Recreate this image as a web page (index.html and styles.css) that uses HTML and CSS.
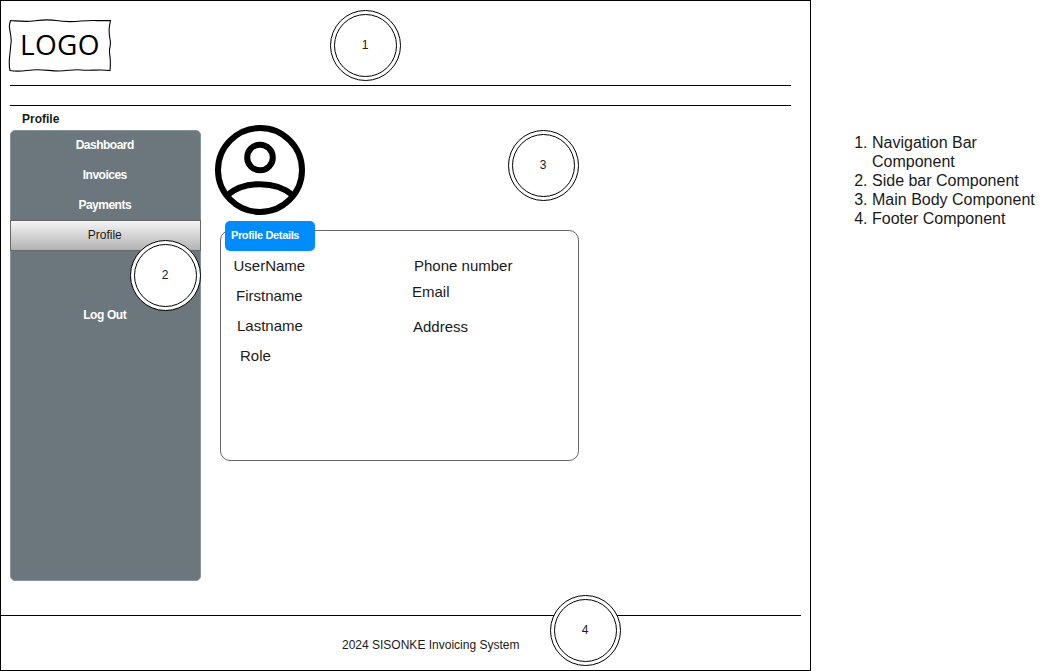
FILE: index.html
```html
<!DOCTYPE html>
<html lang="en">
<head>
<meta charset="utf-8">
<title>Profile</title>
<link rel="stylesheet" href="styles.css">
</head>
<body>
<div class="page">
  <div class="frame">
    <header class="navbar">
      <div class="logo">
        <svg class="logo-outline" width="104" height="54" viewBox="0 0 104 54" fill="none" stroke="#000" stroke-width="1.1">
          <path d="M2 1.500 C10 2 17 3 25 2 S39 0 48 1.500 S63 3 73 2 S92 2 102.500 1.500 C101 9 100.500 12 102 20 S101 27 101.500 33 S103 41 102 51.500 C91 50 83 52 74 51 S60 52 51 52 S34 50 24 51 S10 53 2 51.500 C0 43 2 37 2.500 29 S4 24 2.500 15 S1 7 2.500 1.500"/>
        </svg>
        <span class="logo-text">LOGO</span>
      </div>
      <div class="badge badge-1">1</div>
    </header>
    <main class="body">
      <div class="side">
        <h1 class="title">Profile</h1>
        <nav class="sidebar">
          <a class="item">Dashboard</a>
          <a class="item">Invoices</a>
          <a class="item">Payments</a>
          <a class="item active">Profile</a>
          <a class="item logout">Log Out</a>
          <div class="badge badge-2">2</div>
        </nav>
      </div>
      <section class="content">
        <svg class="avatar" width="90" height="90" viewBox="0 0 90 90" fill="none" stroke="#000" stroke-width="6">
          <circle cx="45" cy="45" r="42"/>
          <circle cx="45" cy="32.500" r="12.800"/>
          <path d="M12.500 70 C29 55.500 61 55.500 77.500 70"/>
        </svg>
        <div class="card">
          <div class="tab">Profile Details</div>
          <div class="fields">
            <div class="column">
              <span class="username">UserName</span>
              <span class="firstname">Firstname</span>
              <span class="lastname">Lastname</span>
              <span class="role">Role</span>
            </div>
            <div class="column">
              <span class="phone">Phone number</span>
              <span class="email">Email</span>
              <span class="address">Address</span>
            </div>
          </div>
        </div>
        <div class="badge badge-3">3</div>
      </section>
    </main>
    <footer class="footer">
      <span class="copyright">2024 SISONKE Invoicing System</span>
      <div class="badge badge-4">4</div>
    </footer>
  </div>
  <ol class="legend">
    <li>Navigation Bar<br>Component</li>
    <li>Side bar Component</li>
    <li>Main Body Component</li>
    <li>Footer Component</li>
  </ol>
</div>
</body>
</html>
```

FILE: styles.css
```css
* { box-sizing: border-box; }
body {
  margin: 0;
  background: #fff;
  color: #000;
  font: 12px/14px "Liberation Sans", Arial, sans-serif;
}
.page { display: flex; height: 671px; overflow: hidden; }
.frame {
  display: flex;
  flex: none;
  flex-direction: column;
  width: 811px;
  height: 671px;
  border: 1px solid #000;
}
.navbar {
  position: relative;
  height: 105px;
  margin: 0 19px 0 9px;
  border-bottom: 1px solid #000;
}
.navbar::after { content: ""; display: block; border-top: 1px solid #000; margin-top: 12px; }
.logo { position: relative; height: 72px; padding: 24px 0 0 10px; }
.logo-outline { position: absolute; left: -2px; top: 18px; }
.logo-text { display: block; font: 28px/38px "Open Sans", sans-serif; letter-spacing: .3px; }
.body { display: flex; height: 509px; padding-left: 9px; }
.side { width: 191px; margin-right: 9px; }
.title { margin: 0; padding: 6px 0 4px 12px; font-size: 12px; line-height: 14px; color: #1a1a1a; }
.sidebar {
  position: relative;
  display: flex;
  flex-direction: column;
  height: 451px;
  border: 1px solid #87939a;
  border-radius: 5px;
  background: #6c777d;
}
.item {
  height: 30px;
  padding-right: 1.500px;
  line-height: 28px;
  text-align: center;
  font-size: 12px;
  font-weight: bold;
  letter-spacing: -.5px;
  color: #fff;
}
.active {
  margin: -1px -1px 0;
  height: 31px;
  border: 1px solid #666;
  background: linear-gradient(#f5f5f5, #b3b3b3);
  color: #1a1a1a;
  font-weight: normal;
  letter-spacing: 0;
}
.logout { margin-top: 50px; letter-spacing: -.4px; }
.content { position: relative; width: 369px; padding: 19px 0 0 5px; }
.avatar { display: block; }
.card {
  width: 359px;
  height: 231px;
  margin: 15px 0 0 5px;
  border: 1px solid #666;
  border-radius: 10px;
}
.tab {
  width: 90px;
  height: 30px;
  margin: -10.500px 0 0 4.400px;
  padding-left: 5.500px;
  border-radius: 5px;
  background: #008cff;
  color: #fff;
  font-size: 11px;
  font-weight: bold;
  line-height: 28px;
  letter-spacing: -.34px;
}
.fields {
  display: grid;
  grid-template-columns: 179px 1fr;
  padding: 5.500px 0 0 12px;
  font-size: 15px;
  line-height: 20px;
  color: #1a1a1a;
}
.column { display: flex; flex-direction: column; gap: 10px; }
.username { padding-left: .5px; }
.firstname { padding-left: 3px; }
.lastname { padding-left: 4px; }
.role { padding-left: 7px; }
.phone { padding-left: 2px; }
.email { margin-top: -4px; }
.address { margin-top: 5px; padding-left: 1px; }
.footer {
  position: relative;
  width: 800px;
  flex: 1;
  padding: 22px 0 0 341px;
  border-top: 1px solid #000;
  color: #1a1a1a;
}
.badge {
  position: absolute;
  width: 71px;
  height: 71px;
  padding-right: 1px;
  border: 1px solid #000;
  border-radius: 50%;
  background: #fff;
  color: #1a1a1a;
  line-height: 69px;
  text-align: center;
}
.badge::after {
  content: "";
  position: absolute;
  inset: 3px;
  border: 1px solid #000;
  border-radius: 50%;
}
.badge-1 { left: 320px; top: 9px; }
.badge-2 { right: -1px; top: 109px; }
.badge-3 { left: 298px; top: 24px; }
.badge-4 { left: 549px; top: -21px; }
.legend {
  width: 219px;
  margin: 133px 0 0 21px;
  padding-left: 40px;
  font-size: 16px;
  line-height: 19px;
  color: #1a1a1a;
}
```
